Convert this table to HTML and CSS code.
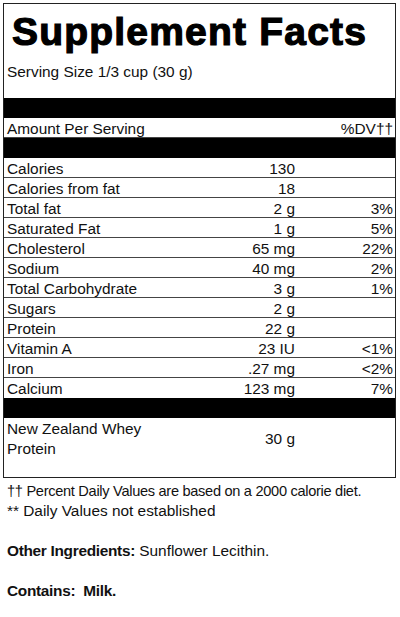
FILE: index.html
```html
<!DOCTYPE html>
<html lang="en">
<head>
    <meta charset="UTF-8">
    <meta name="viewport" content="width=device-width, initial-scale=1.0">
    <title>Supplement Facts</title>
    <link rel="stylesheet" href="styles.css">
</head>
<body>
    <!-- Facts Panel -->
    <div class="facts">
        <h1 class="title">Supplement Facts</h1>
        <div class="serving">Serving Size 1/3 cup (30 g)</div>

        <div class="bar"></div>
        <div class="row">
            <span>Amount Per Serving</span>
            <span></span>
            <span class="dv">%DV††</span>
        </div>
        <div class="bar"></div>

        <div class="row"><span>Calories</span><span class="amt">130</span><span class="dv"></span></div>
        <div class="row"><span>Calories from fat</span><span class="amt">18</span><span class="dv"></span></div>
        <div class="row"><span>Total fat</span><span class="amt">2 g</span><span class="dv">3%</span></div>
        <div class="row"><span>Saturated Fat</span><span class="amt">1 g</span><span class="dv">5%</span></div>
        <div class="row"><span>Cholesterol</span><span class="amt">65 mg</span><span class="dv">22%</span></div>
        <div class="row"><span>Sodium</span><span class="amt">40 mg</span><span class="dv">2%</span></div>
        <div class="row"><span>Total Carbohydrate</span><span class="amt">3 g</span><span class="dv">1%</span></div>
        <div class="row"><span>Sugars</span><span class="amt">2 g</span><span class="dv"></span></div>
        <div class="row"><span>Protein</span><span class="amt">22 g</span><span class="dv"></span></div>
        <div class="row"><span>Vitamin A</span><span class="amt">23 IU</span><span class="dv">&lt;1%</span></div>
        <div class="row"><span>Iron</span><span class="amt">.27 mg</span><span class="dv">&lt;2%</span></div>
        <div class="row last"><span>Calcium</span><span class="amt">123 mg</span><span class="dv">7%</span></div>

        <div class="bar"></div>
        <div class="row blend">
            <span>New Zealand Whey Protein</span>
            <span class="amt">30 g</span>
            <span class="dv"></span>
        </div>
    </div>

    <!-- Footnotes -->
    <div class="notes">
        <p><span class="tight">†† Percent Daily Values are based on a 2000 calorie diet.</span><br>** Daily Values not established</p>
        <p><strong>Other Ingredients:</strong> Sunflower Lecithin.</p>
        <p><strong>Contains:&nbsp; Milk.</strong></p>
    </div>
</body>
</html>
```

FILE: styles.css
```css
/* Base Styles */
body {
    font-family: 'Liberation Sans', Arial, sans-serif;
    font-size: 15.4px;
    background-color: #fff;
    color: #111;
    margin: 0;
    padding: 0;
}

/* Facts Panel */
.facts {
    margin: 3px 4px 0 3px;
    border: 1px solid #222;
}

.title {
    margin: 0;
    padding: 4px 0 0 8px;
    font-size: 39px;
    line-height: 48px;
    font-weight: bold;
    letter-spacing: 1.2px;
    -webkit-text-stroke: 1.2px #000;
    color: #000;
}

.serving {
    margin-top: 6px;
    padding-left: 3px;
    line-height: 20px;
    margin-bottom: 16px;
}

.bar {
    height: 20px;
    background-color: #000;
}

/* Rows */
.row {
    display: grid;
    grid-template-columns: 1fr 120px 98px;
    padding: 3px 2px 0 3px;
    line-height: 16px;
    border-bottom: 1px solid #444;
}

.row.last {
    border-bottom: none;
    height: 17px;
}

.amt,
.dv {
    text-align: right;
}

.row.blend {
    align-items: center;
    line-height: 20px;
    padding-top: 1px;
    padding-bottom: 18px;
    border-bottom: none;
}

/* Footnotes */
.notes {
    padding: 3px 7px 0 7px;
    line-height: 20px;
}

.notes p {
    margin: 0 0 20px 0;
}

.notes strong {
    letter-spacing: -0.3px;
}

.tight {
    font-size: 14.6px;
    letter-spacing: -0.3px;
}
```
